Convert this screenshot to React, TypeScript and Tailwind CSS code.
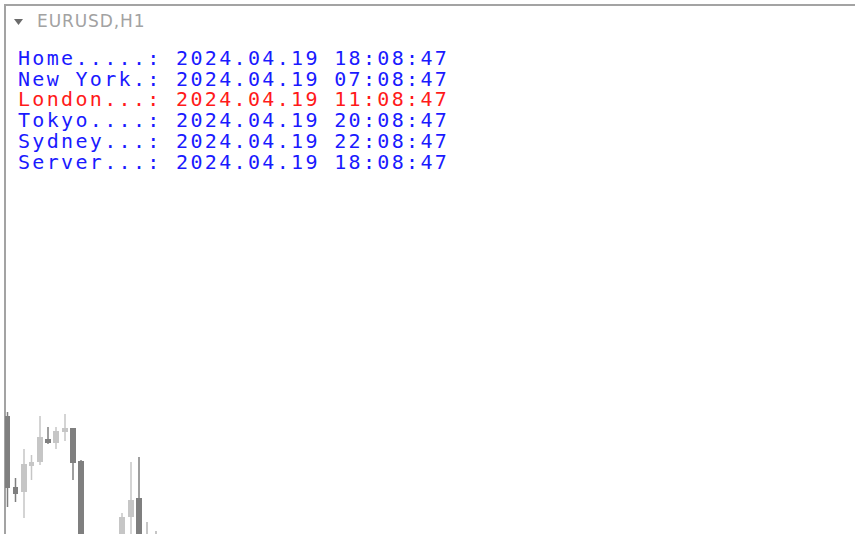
import React from "react";

// Clock rows as printed by the indicator
const rows = [
  { label: "Home.....:", time: "2024.04.19 18:08:47", red: false },
  { label: "New York.:", time: "2024.04.19 07:08:47", red: false },
  { label: "London...:", time: "2024.04.19 11:08:47", red: true },
  { label: "Tokyo....:", time: "2024.04.19 20:08:47", red: false },
  { label: "Sydney...:", time: "2024.04.19 22:08:47", red: false },
  { label: "Server...:", time: "2024.04.19 18:08:47", red: false },
];

// Candles: x, width, wick top, wick bottom, body top, body bottom, dark?
const candles = [
  { x: 5, w: 5, hi: 412, lo: 507, o: 416, c: 488, dark: true },
  { x: 13, w: 5, hi: 478, lo: 502, o: 487, c: 494, dark: true },
  { x: 21, w: 6, hi: 449, lo: 518, o: 464, c: 492, dark: false },
  { x: 29, w: 5, hi: 455, lo: 480, o: 462, c: 466, dark: false },
  { x: 37, w: 6, hi: 416, lo: 465, o: 437, c: 462, dark: false },
  { x: 45, w: 6, hi: 427, lo: 444, o: 439, c: 443, dark: true },
  { x: 53, w: 6, hi: 427, lo: 449, o: 431, c: 443, dark: false },
  { x: 62, w: 6, hi: 414, lo: 441, o: 428, c: 432, dark: false },
  { x: 70, w: 6, hi: 428, lo: 480, o: 428, c: 463, dark: true },
  { x: 78, w: 6, hi: 460, lo: 540, o: 461, c: 540, dark: true },
  { x: 119, w: 6, hi: 513, lo: 540, o: 517, c: 540, dark: false },
  { x: 128, w: 6, hi: 462, lo: 540, o: 500, c: 517, dark: false },
  { x: 136, w: 6, hi: 457, lo: 540, o: 498, c: 540, dark: true },
  { x: 146, w: 2, hi: 522, lo: 540, o: 522, c: 540, dark: false },
  { x: 155, w: 2, hi: 531, lo: 540, o: 531, c: 540, dark: false },
];

const App = () => {
  return (
    <div className="w-[855px] h-[534px] bg-white pt-[4px] pl-[4px] overflow-hidden">
      <div className="relative h-full border-t-2 border-l-2 border-[#a3a3a3]">
        {/* Candles drawn on the chart canvas */}
        <svg
          className="absolute left-[-6px] top-[-6px]"
          width="855"
          height="534"
          viewBox="0 0 855 534"
        >
          {candles.map((k, i) => {
            const col = k.dark ? "#7f7f7f" : "#c6c6c6";
            const cx = k.x + k.w / 2;
            return (
              <g key={i}>
                <line x1={cx} x2={cx} y1={k.hi} y2={k.lo} stroke={col} strokeWidth="1.5" />
                <rect x={k.x} y={k.o} width={k.w} height={k.c - k.o} fill={col} />
              </g>
            );
          })}
        </svg>

        {/* Chart title */}
        <div className="relative flex items-center h-[32px] pl-[8px] gap-[14px]">
          <svg width="9" height="6" viewBox="0 0 9 6">
            <polygon points="0,0 9,0 4.5,6" fill="#6b6b6b" />
          </svg>
          <span
            className="text-[#a2a2a2] text-[17px] tracking-[0.9px]"
            style={{ fontFamily: "'DejaVu Sans', sans-serif" }}
          >
            EURUSD,H1
          </span>
        </div>

        {/* Clock panel */}
        <div
          className="relative mt-[10px] pl-[12px] text-[20px] leading-[20.7px] tracking-[2.33px] whitespace-pre"
          style={{ fontFamily: "'DejaVu Sans Mono', monospace" }}
        >
          {rows.map((r) => (
            <div key={r.label} className={r.red ? "text-[#ff1a1a]" : "text-[#1a1aff]"}>
              {r.label} {r.time}
            </div>
          ))}
        </div>
      </div>
    </div>
  );
};

export default App;
